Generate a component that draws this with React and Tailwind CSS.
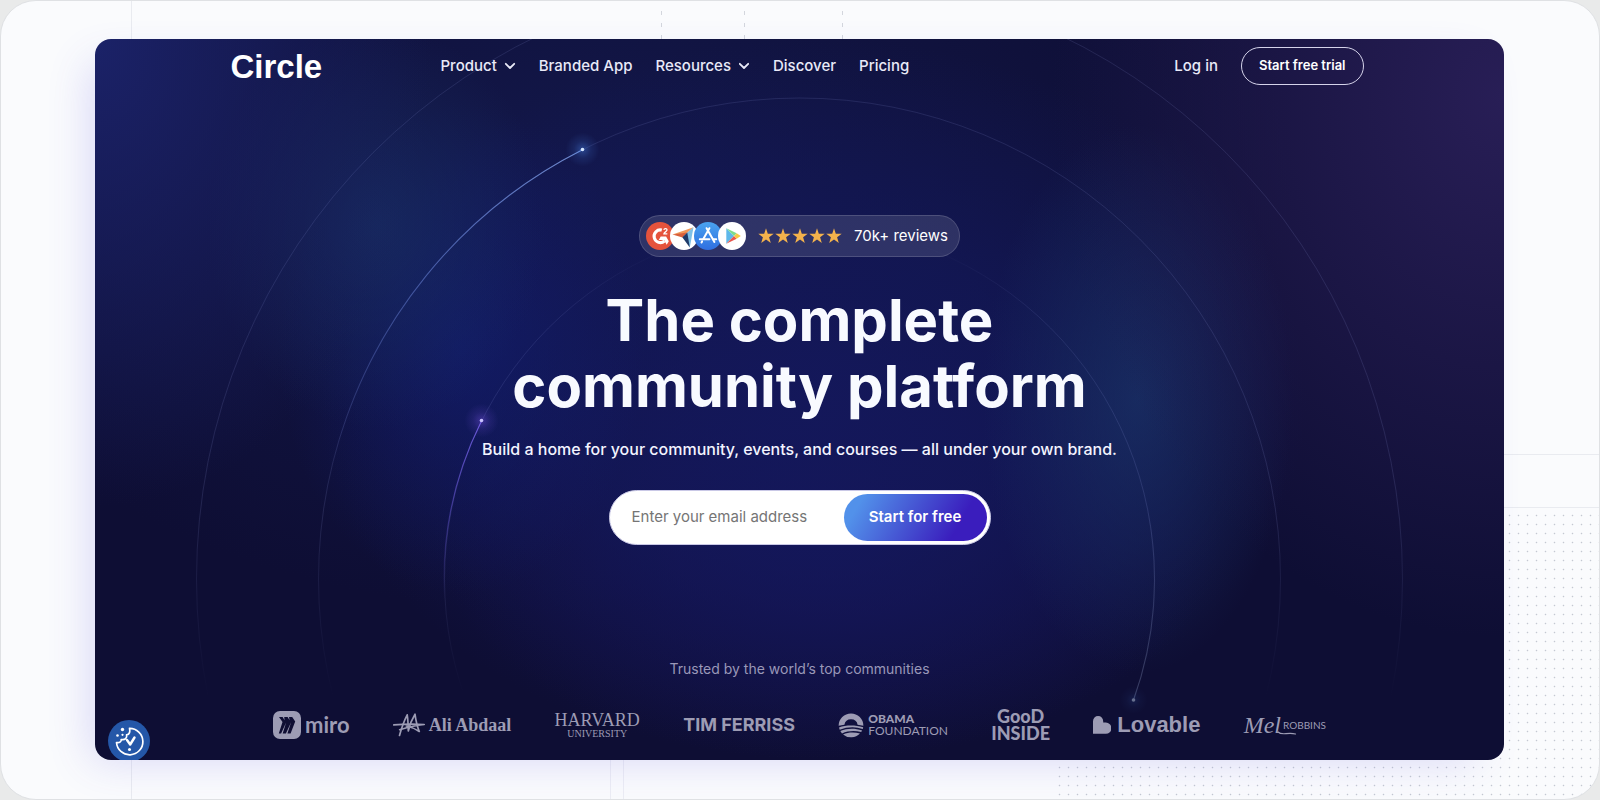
import React from "react";

const NAV = [
  { label: "Product", menu: true },
  { label: "Branded App" },
  { label: "Resources", menu: true },
  { label: "Discover" },
  { label: "Pricing" },
];

function Chevron() {
  return (
    <svg viewBox="0 0 12 12" className="h-3 w-3" fill="none" stroke="currentColor" strokeWidth="1.8" strokeLinecap="round" strokeLinejoin="round" aria-hidden="true">
      <path d="M1.8 3.8 6 8l4.200-4.200" />
    </svg>
  );
}

function Orbits() {
  return (
    <svg
      viewBox="0 0 1410 721"
      className="pointer-events-none absolute top-0 left-1/2 h-[721px] w-[1410px] -translate-x-1/2"
      fill="none"
      aria-hidden="true"
    >
      <defs>
        <linearGradient id="ringFade" gradientUnits="userSpaceOnUse" x1="0" y1="0" x2="0" y2="680">
          <stop offset="0" stopColor="#aab4ff" stopOpacity="0.12" />
          <stop offset="0.7" stopColor="#aab4ff" stopOpacity="0.13" />
          <stop offset="0.97" stopColor="#aab4ff" stopOpacity="0" />
        </linearGradient>
        <linearGradient id="innerFade" gradientUnits="userSpaceOnUse" x1="0" y1="205" x2="0" y2="680">
          <stop offset="0" stopColor="#aab4ff" stopOpacity="0" />
          <stop offset="0.15" stopColor="#aab4ff" stopOpacity="0.1" />
          <stop offset="0.6" stopColor="#aab4ff" stopOpacity="0.15" />
          <stop offset="0.95" stopColor="#aab4ff" stopOpacity="0" />
        </linearGradient>
        <linearGradient id="trailBlue" gradientUnits="userSpaceOnUse" x1="487" y1="110" x2="240" y2="420">
          <stop offset="0" stopColor="#8fb4ff" stopOpacity="0.7" />
          <stop offset="1" stopColor="#6d8cff" stopOpacity="0" />
        </linearGradient>
        <linearGradient id="trailViolet" gradientUnits="userSpaceOnUse" x1="386" y1="381" x2="350" y2="560">
          <stop offset="0" stopColor="#7d66f5" stopOpacity="0.8" />
          <stop offset="1" stopColor="#6a50e8" stopOpacity="0" />
        </linearGradient>
        <linearGradient id="trailGrey" gradientUnits="userSpaceOnUse" x1="1038" y1="661" x2="1060" y2="470">
          <stop offset="0" stopColor="#9fb0d8" stopOpacity="0.3" />
          <stop offset="1" stopColor="#9fb0d8" stopOpacity="0" />
        </linearGradient>
        <radialGradient id="glowBlue">
          <stop offset="0" stopColor="#4f93ff" stopOpacity="0.38" />
          <stop offset="0.5" stopColor="#4f93ff" stopOpacity="0.12" />
          <stop offset="1" stopColor="#4f93ff" stopOpacity="0" />
        </radialGradient>
        <radialGradient id="glowViolet">
          <stop offset="0" stopColor="#8a5cff" stopOpacity="0.35" />
          <stop offset="0.5" stopColor="#8a5cff" stopOpacity="0.12" />
          <stop offset="1" stopColor="#8a5cff" stopOpacity="0" />
        </radialGradient>
      </defs>
      <g stroke="url(#ringFade)">
        <circle cx="704.500" cy="540" r="481" />
        <circle cx="704.500" cy="540" r="603" />
      </g>
      <circle cx="704.500" cy="540" r="355" stroke="url(#innerFade)" />
      <path d="M487.500 110.700A481 481 0 0 0 239.500 417" stroke="url(#trailBlue)" strokeWidth="1.100" />
      <path d="M386.500 382A355 355 0 0 0 349.500 560" stroke="url(#trailViolet)" strokeWidth="1.100" />
      <path d="M1038.500 661A355 355 0 0 0 1052.500 470" stroke="url(#trailGrey)" strokeWidth="1.100" />
      <circle cx="487.500" cy="110.500" r="17" fill="url(#glowBlue)" />
      <circle cx="487.500" cy="110.500" r="1.800" fill="#d5e6ff" />
      <circle cx="386.500" cy="381.500" r="17" fill="url(#glowViolet)" />
      <circle cx="386.500" cy="381.500" r="1.800" fill="#c9c2ff" />
      <circle cx="1038.500" cy="661" r="14" fill="url(#glowBlue)" opacity="0.300" />
      <circle cx="1038.500" cy="661" r="1.800" fill="#68708f" />
    </svg>
  );
}

function G2Icon() {
  return (
    <svg viewBox="0 0 28 28" className="h-7 w-7" aria-hidden="true">
      <circle cx="14" cy="14" r="14" fill="#e5533c" />
      <path d="M15.800 8.100A6.300 6.300 0 1 0 18.500 19" fill="none" stroke="#fff" strokeWidth="3.100" />
      <path d="M14.700 14.600h5.400l2.700 4.600-2.100 3.600-2.700-4.700h-5.200z" fill="#fff" />
      <path d="M17.800 7.800c.4-1.500 3.300-1.500 3.200.3 0 1.500-2.900 2-3.100 3.700h3.400" fill="none" stroke="#fff" strokeWidth="1.300" />
    </svg>
  );
}

function CapterraIcon() {
  return (
    <svg viewBox="0 0 28 28" className="h-7 w-7" aria-hidden="true">
      <circle cx="14" cy="14" r="14" fill="#fff" />
      <path d="M2.500 12.500 23.500 5.200 16.500 11.500z" fill="#f0985a" />
      <path d="M2.500 12.500 17 10.500l-4.500 5z" fill="#d9603a" />
      <path d="M23.500 5.200 16.800 11v4l3 10.500z" fill="#7fc0e6" />
      <path d="M12.300 15.300 17.300 10.600l2.500 14.900z" fill="#1e3a68" />
    </svg>
  );
}

function AppStoreIcon() {
  return (
    <svg viewBox="0 0 28 28" className="h-7 w-7" aria-hidden="true">
      <defs>
        <linearGradient id="appStore" x1="0" y1="0" x2="0" y2="1">
          <stop offset="0" stopColor="#4aa3f0" />
          <stop offset="1" stopColor="#2f6fe0" />
        </linearGradient>
      </defs>
      <circle cx="14" cy="14" r="14" fill="url(#appStore)" />
      <g stroke="#fff" strokeWidth="2" strokeLinecap="round" fill="none">
        <path d="M15.400 6.200 9.300 17" />
        <path d="M12.600 6.200 18.900 17.300l1.500 2.600" />
        <path d="M5.800 17.200h9.600M18.800 17.200h3.400" />
        <path d="M8.100 19.400 7.500 20.500" />
      </g>
    </svg>
  );
}

function PlayIcon() {
  return (
    <svg viewBox="0 0 28 28" className="h-7 w-7" aria-hidden="true">
      <circle cx="14" cy="14" r="14" fill="#fff" />
      <path d="M8.300 6.200v15.600L16 14z" fill="#5eb8ea" />
      <path d="M8.300 6.200 16 14l2.700-2.800z" fill="#7ddc8c" />
      <path d="M8.300 21.800 16 14l2.700 2.800z" fill="#e8574e" />
      <path d="M18.700 11.200 16 14l2.700 2.800 4.100-2.800z" fill="#f5c945" />
    </svg>
  );
}

function Star() {
  return (
    <svg viewBox="0 0 16 16" className="h-4 w-4" fill="#f3b24c" aria-hidden="true">
      <path d="M8 .2l1.800 5.500 5.900.1-4.600 3.500 1.700 5.700L8 11.600l-4.800 3.400 1.700-5.700L.3 5.800l5.900-.1z" />
    </svg>
  );
}

function ReviewBadge() {
  return (
    <a href="#reviews" className="flex h-[42px] items-center rounded-full border border-white/15 bg-white/12 pr-[11px] pl-1.5">
      <span className="flex -space-x-1">
        <G2Icon />
        <CapterraIcon />
        <AppStoreIcon />
        <PlayIcon />
      </span>
      <span className="ml-3 flex gap-px">
        {[0, 1, 2, 3, 4].map((n) => (
          <Star key={n} />
        ))}
      </span>
      <span className="ml-3 text-[15px] text-white">70k+ reviews</span>
    </a>
  );
}

function Logos() {
  return (
    <ul className="mx-auto flex h-9 w-full max-w-[1053px] flex-wrap items-center justify-between text-[#9d9cb4]">
      <li className="flex items-center gap-1">
        <svg viewBox="0 0 28 28" className="h-7 w-7" aria-hidden="true">
          <rect width="28" height="28" rx="7" fill="currentColor" />
          <path
            d="M6 6h3.600l2 3.200L11.200 6h3.400l2 3.200L16 6h3.200l3 4.500-4.600 12h-3.200l3.700-11.300-5.200 11.300h-3.200l3.400-11-5 11H5.800l3.700-11.500z"
            fill="#0f0e33"
          />
        </svg>
        <span className="font-['Lato'] text-[22px] leading-none font-bold">miro</span>
      </li>
      <li className="flex items-center gap-1">
        <svg viewBox="0 0 32 26" className="h-[26px] w-8" fill="none" stroke="currentColor" strokeWidth="1.700" strokeLinecap="round" strokeLinejoin="round" aria-hidden="true">
          <path d="M.8 12.800c9-.6 20-.8 30.400-.3-8 .8-17 3-24.500 5.200" />
          <path d="M6.500 23.500C8.500 16 11 9 14.200 2.800c.8 5 1 11 1.100 16.200C16.500 13 19 7 22 2.200c.8 6 2 12 4.300 17.300-3.500-2.500-8-4.500-13-5.500" />
        </svg>
        <span className="font-['Liberation_Serif'] text-[18px] leading-none font-bold">Ali Abdaal</span>
      </li>
      <li className="flex flex-col items-center font-['Liberation_Serif'] leading-none">
        <span className="text-[18px] leading-[18px]">HARVARD</span>
        <span className="text-[10px] leading-[10px]">UNIVERSITY</span>
      </li>
      <li className="font-['Inter'] text-[18px] leading-none font-bold">TIM FERRISS</li>
      <li className="flex items-center gap-1">
        <svg viewBox="0 0 26 26" className="h-[26px] w-[26px]" fill="currentColor" aria-hidden="true">
          <path d="M.6 13.800A12.400 12.400 0 1 1 25.400 13.800L19.600 12.700a6.700 6.700 0 0 0-13.200 0z" />
          <path d="M1 15.500c7-2.600 16-2.600 24.200-.3l-.4 1.700C17 14.500 9 14.900 1.700 17.800z" />
          <path d="M2.300 19c7-3 14.500-3 21.800-.6l-.9 1.600c-6.200-1.700-13-1.500-19.200 1.400z" />
          <path d="M5 22.400c5.400-2.200 11.500-2.300 17-.8A12.500 12.500 0 0 1 5 22.400z" />
        </svg>
        <span className="flex flex-col items-start font-['Lato']">
          <span className="text-[12px] leading-3 font-black">OBAMA</span>
          <span className="text-[12px] leading-3">FOUNDATION</span>
        </span>
      </li>
      <li className="flex flex-col items-center font-['Lato'] text-[18px] leading-[17px] font-black">
        <span>GooD</span>
        <span>INSIDE</span>
      </li>
      <li className="flex items-center gap-1.5">
        <svg viewBox="0 0 18 18" className="h-[18px] w-[18px]" fill="currentColor" aria-hidden="true">
          <path d="M0 5.200a5 5 0 0 1 10.200 0v1.300h2.600a5.300 5.300 0 0 1 0 11.300H0z" />
        </svg>
        <span className="font-['Liberation_Sans'] text-[22px] leading-none font-bold">Lovable</span>
      </li>
      <li className="relative flex items-center gap-0.5">
        <span className="font-['Liberation_Serif'] text-[24px] leading-7 italic">Mel</span>
        <span className="font-['Lato'] text-[10px] leading-none">ROBBINS</span>
        <svg viewBox="0 0 86 28" className="absolute top-0 left-0 h-7 w-[86px]" fill="none" stroke="currentColor" strokeWidth="1.200" strokeLinecap="round" aria-hidden="true">
          <path d="M34 21c4 4 9 0 17.500 2" />
        </svg>
      </li>
    </ul>
  );
}

function CookieButton() {
  return (
    <button type="button" aria-label="Cookie preferences" className="absolute -bottom-0.5 left-[13px] h-[42px] w-[42px] rounded-full bg-[#2457a8]">
      <svg viewBox="0 0 42 42" className="h-full w-full" fill="none" stroke="#fff" strokeWidth="2" strokeLinecap="round" strokeLinejoin="round" aria-hidden="true">
        <path d="M21.500 8.400A13.200 13.200 0 1 1 8.500 22.500c3.500.6 5-1.200 4.700-3 3.600.8 6.200-1.200 5.400-4.600 3.200-.4 3.600-3.500 2.900-6.500z" strokeWidth="1.700" />
        <path d="M19 20l3.200 4.500 4.300-7" strokeWidth="2.400" />
        <circle cx="21.500" cy="29.500" r="1.500" fill="#fff" stroke="none" />
        <circle cx="14.500" cy="9.500" r="1.700" fill="#fff" stroke="none" />
        <circle cx="9.500" cy="15.500" r="1.300" fill="#fff" stroke="none" />
        <circle cx="14.500" cy="14.800" r="1.100" fill="#fff" stroke="none" />
      </svg>
    </button>
  );
}

function Backdrop() {
  return (
    <div className="pointer-events-none absolute inset-0" aria-hidden="true">
      <div className="absolute inset-y-0 left-[130px] border-l border-[#e9ebf0]" />
      <div className="absolute top-2.5 left-[660px] h-7 w-px bg-[repeating-linear-gradient(to_bottom,#d3d6dd_0,#d3d6dd_4px,transparent_4px,transparent_12px)]" />
      <div className="absolute top-2.5 left-[743px] h-7 w-px bg-[repeating-linear-gradient(to_bottom,#d3d6dd_0,#d3d6dd_4px,transparent_4px,transparent_12px)]" />
      <div className="absolute top-2.5 left-[841px] h-7 w-px bg-[repeating-linear-gradient(to_bottom,#d3d6dd_0,#d3d6dd_4px,transparent_4px,transparent_12px)]" />
      <div className="absolute bottom-0 left-[609px] h-10 w-3.5 border-x border-[#ecedf4]" />
      <div className="absolute top-[453px] right-0 h-[54px] w-24 border-y border-[#e9ebf0]" />
      <div className="absolute top-[510px] right-0 bottom-0 left-[1054px] bg-[radial-gradient(circle_at_center,#c4c8d2_0.600px,transparent_1.100px)] bg-[length:9px_9px]" />
    </div>
  );
}

export default function App() {
  return (
    <div className="bg-[#e9eaea] font-['Inter',sans-serif] antialiased">
      <div className="relative min-h-screen overflow-hidden rounded-[36px] border border-[#dfe1e4] bg-[#fafbfd] pt-[38px] pr-[95px] pb-[39px] pl-[94px]">
        <Backdrop />
        <div className="relative flex min-h-[721px] flex-col rounded-2xl shadow-[-16px_12px_44px_-12px_rgba(80,70,220,0.200)]">
          <div
            className="absolute inset-0 rounded-2xl bg-[#0e0e34] bg-[radial-gradient(ellipse_24%_65%_at_0%_0%,#1b2268_0%,transparent_100%),radial-gradient(ellipse_32%_75%_at_100%_8%,#281e56_0%,transparent_100%),radial-gradient(ellipse_12%_28%_at_20%_26%,rgba(26,50,104,0.600)_0%,transparent_100%),radial-gradient(ellipse_11%_38%_at_74%_50%,rgba(26,50,104,0.750)_0%,transparent_100%),radial-gradient(ellipse_13%_34%_at_26%_43%,rgba(18,30,116,0.600)_0%,transparent_100%),radial-gradient(ellipse_35%_50%_at_51%_50%,rgba(20,24,92,0.900)_0%,rgba(19,24,90,0.700)_45%,transparent_100%),radial-gradient(ellipse_28%_32%_at_52%_68%,rgba(26,22,104,0.700)_0%,transparent_100%),radial-gradient(ellipse_50%_60%_at_35%_20%,rgba(20,26,80,0.800)_0%,transparent_100%)]"
            aria-hidden="true"
          />
          <Orbits />

          <header className="relative mx-auto flex h-[54px] w-full max-w-[1138px] items-center pr-[5px]">
            <a href="#home" className="w-[210px] font-['Liberation_Sans'] text-[33px] leading-none font-bold text-white">
              Circle
            </a>
            <nav className="flex items-center gap-[23px] text-[15px] font-medium text-[#e9eaf8]" aria-label="Main">
              {NAV.map((item) =>
                item.menu ? (
                  <button key={item.label} type="button" className="flex items-center gap-[7px]">
                    {item.label}
                    <Chevron />
                  </button>
                ) : (
                  <a key={item.label} href="#nav">
                    {item.label}
                  </a>
                )
              )}
            </nav>
            <div className="ml-auto flex items-center gap-[23px]">
              <a href="#login" className="text-[15px] font-medium text-[#e9eaf8]">
                Log in
              </a>
              <a href="#trial" className="flex h-[38px] items-center rounded-full border border-[#d5d3ea] px-[17px] text-[13px] font-semibold text-white">
                Start free trial
              </a>
            </div>
          </header>

          <main className="relative flex flex-1 flex-col items-center pt-[122px] text-center">
            <ReviewBadge />
            <h1 className="mt-[30px] text-[58px] leading-[66px] font-bold text-[#f8faff]">
              The complete
              <br />
              community platform
            </h1>
            <p className="mt-[18px] text-base leading-6 font-medium text-[#f3f4ff]">
              Build a home for your community, events, and courses — all under your own brand.
            </p>
            <form className="mt-[29px] flex h-[55px] w-full max-w-[382px] items-center rounded-full border border-[#c9c8e6] bg-white p-[3px] pl-[22px]" onSubmit={(e) => e.preventDefault()}>
              <input
                type="email"
                aria-label="Email address"
                placeholder="Enter your email address"
                className="min-w-0 flex-1 bg-transparent text-[15px] text-gray-800 outline-none placeholder:text-[#757575]"
              />
              <button
                type="submit"
                className="h-full w-[143px] rounded-full bg-[linear-gradient(120deg,#5291ea_12%,#3a1dbd_78%)] text-[15px] font-semibold text-white"
              >
                Start for free
              </button>
            </form>
            <div className="mt-auto w-full pb-[17px]">
              <p className="text-sm leading-6 text-[#9a98b8]">Trusted by the world’s top communities</p>
              <div className="mt-[26px]">
                <Logos />
              </div>
            </div>
          </main>
          <div className="pointer-events-none absolute inset-0 overflow-hidden rounded-2xl *:pointer-events-auto">
            <CookieButton />
          </div>
        </div>
      </div>
    </div>
  );
}
